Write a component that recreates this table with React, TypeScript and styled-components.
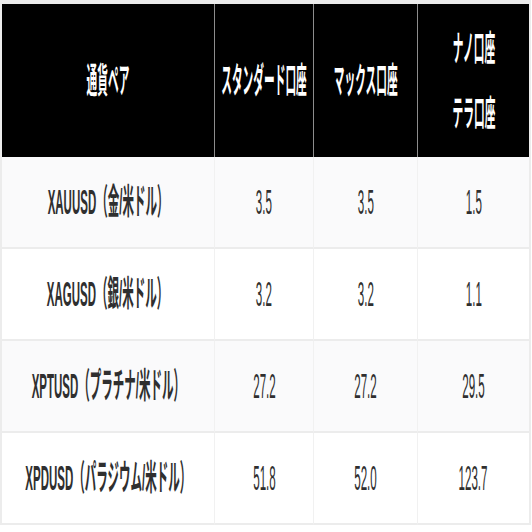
import { FC } from "react";
import styled, { createGlobalStyle } from "styled-components";

const GlobalStyle = createGlobalStyle`
  * {
    box-sizing: border-box;
  }
  body {
    margin: 0;
    background: #fff;
    font-family: "Liberation Sans", "Noto Sans CJK JP", sans-serif;
  }
`;

interface IRow {
  pair: string;
  standard: string;
  max: string;
  nano: string;
}

const rows: IRow[] = [
  { pair: "XAUUSD（金/米ドル）", standard: "3.5", max: "3.5", nano: "1.5" },
  { pair: "XAGUSD（銀/米ドル）", standard: "3.2", max: "3.2", nano: "1.1" },
  { pair: "XPTUSD（プラチナ/米ドル）", standard: "27.2", max: "27.2", nano: "29.5" },
  { pair: "XPDUSD（パラジウム/米ドル）", standard: "51.8", max: "52.0", nano: "123.7" },
];

const App: FC = () => {
  return (
    <>
      <GlobalStyle />
      <SpreadTable>
        <colgroup>
          <Col $width={213} />
          <Col $width={99} />
          <Col $width={104} />
          <Col $width={111} />
        </colgroup>
        <thead>
          <tr>
            <HeadCell>
              <CellInner>
                <Squeeze>通貨ペア</Squeeze>
              </CellInner>
            </HeadCell>
            <HeadCell>
              <CellInner>
                <Squeeze>スタンダード口座</Squeeze>
              </CellInner>
            </HeadCell>
            <HeadCell>
              <CellInner>
                <Squeeze>マックス口座</Squeeze>
              </CellInner>
            </HeadCell>
            <HeadCell>
              <CellInner>
                <Squeeze>
                  <Line>ナノ口座</Line>
                  <Line>テラ口座</Line>
                </Squeeze>
              </CellInner>
            </HeadCell>
          </tr>
        </thead>
        <tbody>
          {rows.map((row, i) => (
            <BodyRow key={row.pair} $striped={i % 2 === 0}>
              <BodyCell>
                <CellInner>
                  <Squeeze $kind="label">{row.pair}</Squeeze>
                </CellInner>
              </BodyCell>
              <BodyCell>
                <CellInner>
                  <Squeeze $kind="num">{row.standard}</Squeeze>
                </CellInner>
              </BodyCell>
              <BodyCell>
                <CellInner>
                  <Squeeze $kind="num">{row.max}</Squeeze>
                </CellInner>
              </BodyCell>
              <BodyCell>
                <CellInner>
                  <Squeeze $kind="num">{row.nano}</Squeeze>
                </CellInner>
              </BodyCell>
            </BodyRow>
          ))}
        </tbody>
      </SpreadTable>
    </>
  );
};

export default App;

const squeezeX = { head: 0.535, label: 0.575, num: 0.58 };

const SpreadTable = styled.table`
  width: 531px;
  table-layout: fixed;
  border-collapse: separate;
  border-spacing: 0;
  border-top: 4px solid #ececec;
  border-left: 2px solid #ececec;
  border-right: 2px solid #ececec;
`;

const Col = styled.col<{ $width: number }>`
  width: ${(p) => p.$width}px;
`;

const HeadCell = styled.th`
  height: 153px;
  padding: 0;
  background: #000;
  color: #fff;
  font-weight: 700;
  border-right: 1px solid #8c8c8c;
  &:last-child {
    border-right: none;
  }
`;

const BodyRow = styled.tr<{ $striped: boolean }>`
  background: ${(p) => (p.$striped ? "#fafafb" : "#fff")};
`;

const BodyCell = styled.td`
  height: 92px;
  padding: 0;
  color: #2f2f2f;
  border-bottom: 2px solid #ececec;
  border-right: 1px solid #f1f1f1;
  &:last-child {
    border-right: none;
  }
`;

const CellInner = styled.div`
  display: flex;
  justify-content: center;
  align-items: center;
  width: 100%;
  height: 100%;
`;

const Squeeze = styled.span<{ $kind?: "head" | "label" | "num" }>`
  display: inline-block;
  flex-shrink: 0;
  white-space: nowrap;
  text-align: center;
  font-size: 20px;
  line-height: 36px;
  font-weight: ${(p) => (p.$kind === "label" ? 700 : "inherit")};
  transform: scale(${(p) => squeezeX[p.$kind ?? "head"]}, 1.78);
`;

const Line = styled.span`
  display: block;
`;
